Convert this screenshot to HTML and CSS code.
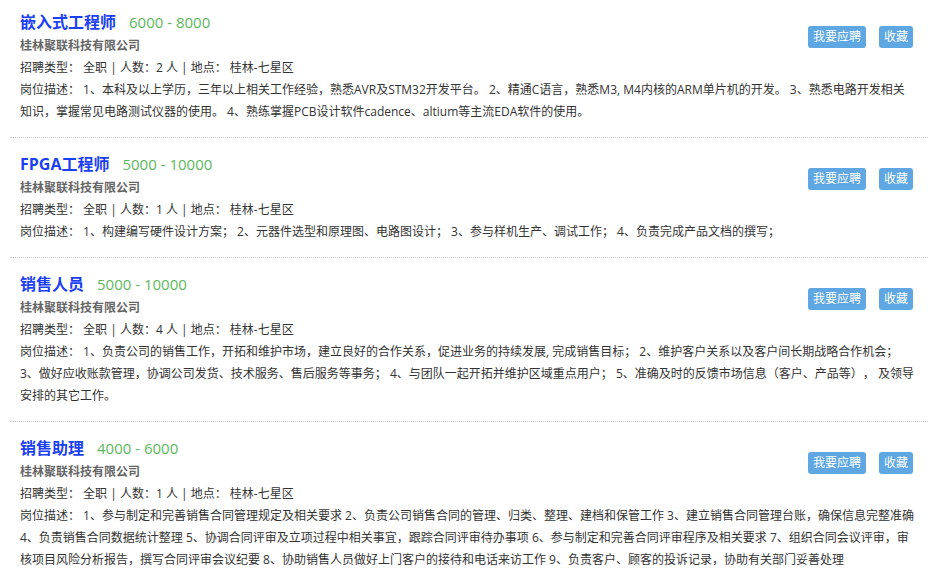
FILE: index.html
```html
<!DOCTYPE html>
<html lang="zh">
<head>
<meta charset="utf-8">
<title>职位列表</title>
<link rel="stylesheet" href="styles.css">
</head>
<body>
<ul class="job-list">
  <li class="job">
    <div class="job-head"><a class="job-title">嵌入式工程师</a><span class="salary">6000 - 8000</span></div>
    <div class="company">桂林聚联科技有限公司</div>
    <div class="info">招聘类型： 全职 | 人数：2 人 | 地点： 桂林-七星区</div>
    <div class="actions"><a class="btn">我要应聘</a><a class="btn">收藏</a></div>
    <p class="desc">岗位描述： 1、本科及以上学历，三年以上相关工作经验，熟悉AVR及STM32开发平台。 2、精通C语言，熟悉M3, M4内核的ARM单片机的开发。 3、熟悉电路开发相关<br>知识，掌握常见电路测试仪器的使用。 4、熟练掌握PCB设计软件cadence、altium等主流EDA软件的使用。</p>
  </li>
  <li class="job">
    <div class="job-head"><a class="job-title">FPGA工程师</a><span class="salary">5000 - 10000</span></div>
    <div class="company">桂林聚联科技有限公司</div>
    <div class="info">招聘类型： 全职 | 人数：1 人 | 地点： 桂林-七星区</div>
    <div class="actions"><a class="btn">我要应聘</a><a class="btn">收藏</a></div>
    <p class="desc">岗位描述： 1、构建编写硬件设计方案； 2、元器件选型和原理图、电路图设计； 3、参与样机生产、调试工作； 4、负责完成产品文档的撰写；</p>
  </li>
  <li class="job">
    <div class="job-head"><a class="job-title">销售人员</a><span class="salary">5000 - 10000</span></div>
    <div class="company">桂林聚联科技有限公司</div>
    <div class="info">招聘类型： 全职 | 人数：4 人 | 地点： 桂林-七星区</div>
    <div class="actions"><a class="btn">我要应聘</a><a class="btn">收藏</a></div>
    <p class="desc">岗位描述： 1、负责公司的销售工作，开拓和维护市场，建立良好的合作关系，促进业务的持续发展, 完成销售目标； 2、维护客户关系以及客户间长期战略合作机会； 3、做好应收账款管理，协调公司发货、技术服务、售后服务等事务； 4、与团队一起开拓并维护区域重点用户； 5、准确及时的反馈市场信息（客户、产品等）， 及领导安排的其它工作。</p>
  </li>
  <li class="job">
    <div class="job-head"><a class="job-title">销售助理</a><span class="salary">4000 - 6000</span></div>
    <div class="company">桂林聚联科技有限公司</div>
    <div class="info">招聘类型： 全职 | 人数：1 人 | 地点： 桂林-七星区</div>
    <div class="actions"><a class="btn">我要应聘</a><a class="btn">收藏</a></div>
    <p class="desc">岗位描述： 1、参与制定和完善销售合同管理规定及相关要求 2、负责公司销售合同的管理、归类、整理、建档和保管工作 3、建立销售合同管理台账，确保信息完整准确 4、负责销售合同数据统计整理 5、协调合同评审及立项过程中相关事宜，跟踪合同评审待办事项 6、参与制定和完善合同评审程序及相关要求 7、组织合同会议评审，审核项目风险分析报告，撰写合同评审会议纪要 8、协助销售人员做好上门客户的接待和电话来访工作 9、负责客户、顾客的投诉记录，协助有关部门妥善处理</p>
  </li>
</ul>
</body>
</html>
```
FILE: styles.css
```css
html, body {
  margin: 0;
  padding: 0;
  background: #fff;
}
body {
  font-family: "Open Sans", "Noto Sans CJK SC", sans-serif;
  font-size: 12px;
  color: #333;
  text-spacing-trim: space-all;
}
.job-list {
  list-style: none;
  margin: 0;
  padding: 0 9px 0 10px;
}
.job {
  display: grid;
  grid-template-columns: 1fr auto;
  padding: 14px 10px 14px;
  border-bottom: 1px dotted #c8c8c8;
}
.job:first-child {
  padding-top: 10px;
}
.job-head {
  grid-column: 1;
  grid-row: 1;
  display: flex;
  align-items: baseline;
  gap: 13px;
  height: 25px;
  line-height: 24px;
}
.job-title {
  font-size: 16px;
  font-weight: bold;
  color: #1b3ff5;
}
.salary {
  font-size: 15px;
  color: #5cb85c;
}
.company {
  grid-column: 1;
  grid-row: 2;
  line-height: 22px;
  font-weight: bold;
  color: #666;
}
.info {
  grid-column: 1;
  grid-row: 3;
  line-height: 22px;
}
.actions {
  grid-column: 2;
  grid-row: 1 / span 3;
  align-self: start;
  display: flex;
  gap: 13px;
  margin-top: 16px;
  margin-right: 5px;
}
.btn {
  display: block;
  height: 22px;
  line-height: 22px;
  padding: 0 5px;
  background: #5ea7e2;
  color: #fff;
  border-radius: 3px;
  font-size: 12px;
}
.desc {
  grid-column: 1 / span 2;
  grid-row: 4;
  margin: 0;
  line-height: 22px;
}
```
